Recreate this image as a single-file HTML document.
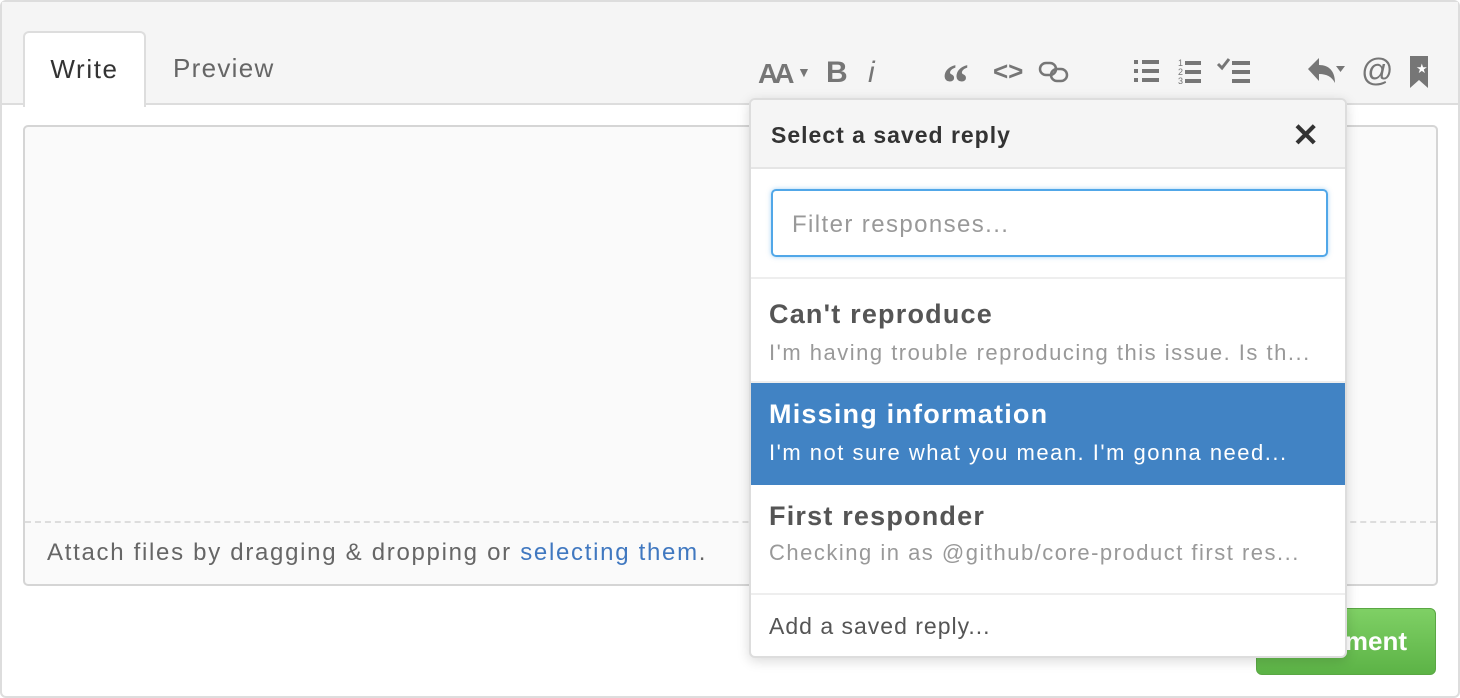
<!DOCTYPE html>
<html><head><style>
*{box-sizing:border-box;margin:0;padding:0}
body{width:1460px;height:698px;background:#fff;font-family:"Liberation Sans",sans-serif;position:relative;overflow:hidden}
.frame{position:absolute;left:0;top:0;width:1460px;height:698px;border:2px solid #ddd;border-radius:6px}
.head{position:absolute;left:2px;top:2px;width:1456px;height:103px;background:#f5f5f5;border-bottom:2px solid #ddd}
.tab{position:absolute;left:23px;top:31px;width:123px;height:76px;background:#fff;border:2px solid #ddd;border-bottom:none;border-radius:6px 6px 0 0;font-size:26px;color:#333;text-align:center;line-height:72px;letter-spacing:1.6px}
.tab2{position:absolute;left:173px;top:53px;font-size:26px;color:#666;letter-spacing:1.3px}
.ta{position:absolute;left:23px;top:125px;width:1415px;height:461px;background:#fafafa;border:2px solid #d5d5d5;border-radius:5px}
.dash{position:absolute;left:0;right:0;top:394px;border-top:2px dashed #ddd}
.att{position:absolute;left:22px;top:412px;font-size:24px;color:#666;letter-spacing:1.7px}
.att a{color:#4078c0;text-decoration:none}
.btn{position:absolute;left:1256px;top:608px;width:180px;height:67px;border-radius:6px;background:linear-gradient(#7fd065,#5cb346);border:1px solid #5aa744;color:#fff;font-weight:bold;font-size:26px;line-height:64px;text-align:right;padding-right:28px}
.ic{position:absolute;top:52px;color:#767676;font-size:30px;font-weight:bold}
.dd{position:absolute;left:749px;top:98px;width:598px;height:560px;background:#fff;border:2px solid #ddd;border-radius:6px;box-shadow:0 3px 12px rgba(0,0,0,.15);overflow:hidden}
.ddh{height:69px;background:#f5f5f5;border-bottom:2px solid #e5e5e5;font-size:23px;font-weight:bold;color:#333;padding:22px 20px;letter-spacing:1px}
.x{position:absolute;right:26px;top:16px;font-size:32px;color:#333;font-weight:bold}
.fil{position:absolute;left:20px;top:89px;width:557px;height:68px;border:2px solid #51a7e8;border-radius:5px;box-shadow:0 0 5px rgba(81,167,232,.5);font-size:24px;color:#999;padding:20px 19px;letter-spacing:1.4px}
.sep{position:absolute;left:0;right:0;top:177px;border-top:2px solid #eee}
.it{position:absolute;left:0;right:0;padding:20px 18px;border-bottom:2px solid #eee}
.it b{display:block;font-size:27px;color:#555;letter-spacing:1.2px}
.it span{display:block;font-size:22px;color:#999;margin-top:10px;letter-spacing:1.5px}
.it.sel{background:#4183c4;border-color:#4183c4;padding-top:16px}
.it.sel b,.it.sel span{color:#fff}
.foot{position:absolute;left:18px;top:513px;font-size:23px;color:#555;letter-spacing:1px}
</style></head><body>
<div class="frame"></div>
<div class="head"></div>
<div class="tab">Write</div>
<div class="tab2">Preview</div>
<div class="ic" style="left:758px;font-size:28px;top:58px;letter-spacing:-4px">AA</div>
<div class="ic" style="left:797px;font-size:14px;top:64px">▼</div>
<div class="ic" style="left:826px;top:56px">B</div>
<div class="ic" style="left:868px;font-style:italic;font-weight:normal;top:56px">i</div>
<div class="ic" style="left:942px;font-family:'Liberation Serif';font-size:54px;top:52px">“</div>
<div class="ic" style="left:993px;font-size:26px;top:56px">&lt;&gt;</div>
<svg style="position:absolute;left:1038px;top:60px" width="32" height="24" viewBox="0 0 32 24" fill="none" stroke="#767676" stroke-width="2.5"><rect x="2" y="3" width="16" height="12" rx="6"/><rect x="13" y="9" width="16" height="12" rx="6"/></svg>
<svg style="position:absolute;left:1134px;top:58px" width="130" height="28" fill="#767676"><rect x="0" y="2" width="4" height="4"/><rect x="8" y="2" width="17" height="4"/><rect x="0" y="11" width="4" height="4"/><rect x="8" y="11" width="17" height="4"/><rect x="0" y="20" width="4" height="4"/><rect x="8" y="20" width="17" height="4"/>
<text x="44" y="8" font-size="9" font-family="Liberation Sans">1</text><text x="44" y="17" font-size="9" font-family="Liberation Sans">2</text><text x="44" y="26" font-size="9" font-family="Liberation Sans">3</text><rect x="51" y="3" width="16" height="4"/><rect x="51" y="12" width="16" height="4"/><rect x="51" y="21" width="16" height="4"/>
<path d="M84 6l4 4 7-9" stroke="#767676" stroke-width="3" fill="none"/><rect x="98" y="3" width="18" height="4"/><rect x="98" y="12" width="18" height="4"/><rect x="98" y="21" width="18" height="4"/></svg>
<svg style="position:absolute;left:1306px;top:56px" width="130" height="34" fill="#767676"><path d="M2 13L13 2v7c10 0 16 6 16 18-3-6-8-9-16-9v7z"/><path d="M30 10h9l-4.5 6z"/><path d="M104 0h18v32l-9-8-9 8z"/><text x="110" y="17" font-size="13" fill="#fff">★</text></svg>
<div class="ic" style="left:1361px;font-weight:normal;font-size:32px;top:52px">@</div>
<div class="ta"><div class="dash"></div><div class="att">Attach files by dragging &amp; dropping or <a>selecting them</a>.</div></div>
<div class="btn">ment</div>
<div class="dd">
<div class="ddh">Select a saved reply</div><div class="x">✕</div>
<div class="fil">Filter responses...</div>
<div class="sep"></div>
<div class="it" style="top:179px;height:104px"><b>Can't reproduce</b><span>I'm having trouble reproducing this issue. Is th...</span></div>
<div class="it sel" style="top:283px;height:102px"><b>Missing information</b><span>I'm not sure what you mean. I'm gonna need...</span></div>
<div class="it" style="top:385px;height:110px;padding-top:16px"><b>First responder</b><span style="margin-top:8px">Checking in as @github/core-product first res...</span></div>
<div class="foot">Add a saved reply...</div>
</div>
</body></html>
